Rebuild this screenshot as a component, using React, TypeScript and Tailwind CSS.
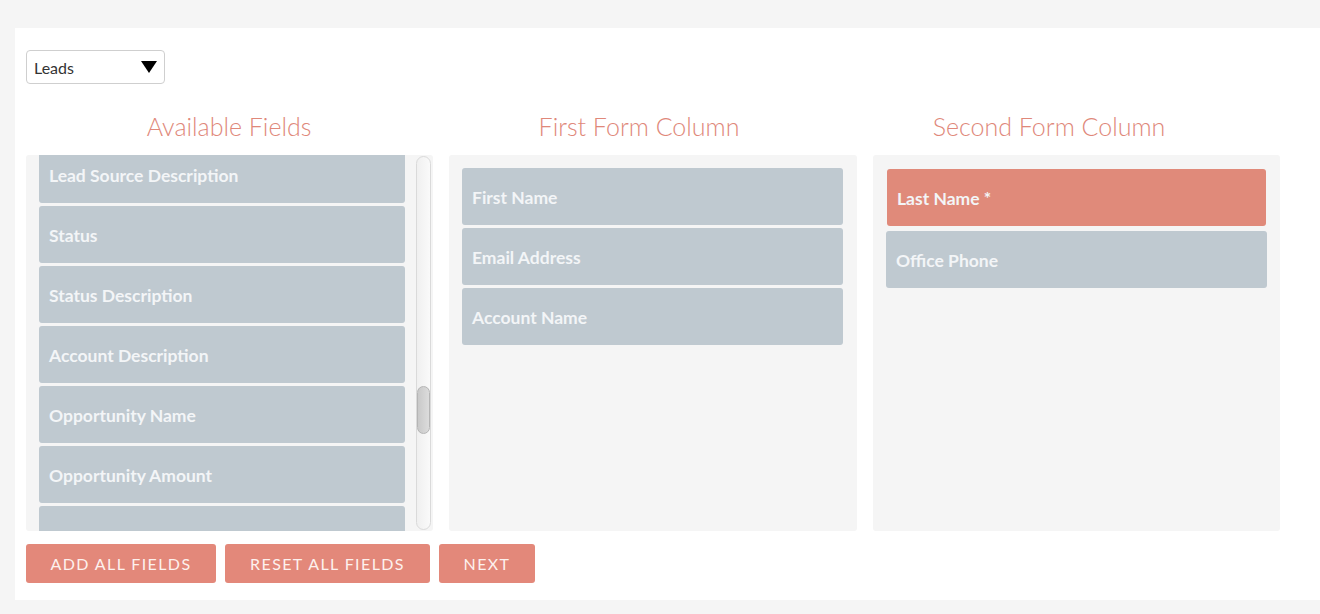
import React from "react";

const available = [
  "Lead Source Description",
  "Status",
  "Status Description",
  "Account Description",
  "Opportunity Name",
  "Opportunity Amount",
  "",
];

function Item({ label, salmon = false, extra = "" }: { label: string; salmon?: boolean; extra?: string }) {
  return (
    <div
      className={`h-[57px] shrink-0 rounded-[3px] flex items-center px-[10px] pt-[4px] text-[17.5px] font-bold text-[#f3f5f7] ${
        salmon ? "bg-[#e08a7a]" : "bg-[#bfc9d0]"
      } ${extra}`}
    >
      {label}
    </div>
  );
}

const headingCls = "w-[410px] h-[32px] leading-[32px] text-center text-[25px] font-light text-[#e0887a]";

export default function App() {
  return (
    <div
      className="w-[1320px] h-[614px] bg-[#f5f5f5] pt-[28px] pl-[15px] overflow-hidden"
      style={{ fontFamily: "Lato, 'Open Sans', sans-serif" }}
    >
      <div className="bg-white h-[572px] pl-[11px] pt-[22px] pb-[17px] flex flex-col">
        {/* select */}
        <div className="w-[139px] h-[34px] border border-[#cfcfcf] rounded-[4px] flex items-center justify-between pl-[7px] pr-[6px]">
          <span className="text-[16px] text-[#333] pt-[2px]">Leads</span>
          <svg width="18" height="14" viewBox="0 0 18 14">
            <polygon points="1,1 17,1 9,13" fill="#000" />
          </svg>
        </div>

        {/* headings */}
        <div className="flex mt-[26px] ml-[-2px]">
          <h2 className={headingCls}>Available Fields</h2>
          <h2 className={headingCls}>First Form Column</h2>
          <h2 className={headingCls}>Second Form Column</h2>
        </div>

        {/* columns */}
        <div className="flex gap-[16px] mt-[13px]">
          {/* Available */}
          <div className="w-[407px] h-[376px] bg-[#f5f5f5] rounded-[3px] flex pl-[13px] pr-[2px]">
            <div className="w-[366px] overflow-hidden">
              <div className="flex flex-col gap-[3px] mt-[-9px]">
                {available.map((a, i) => (
                  <Item key={i} label={a} />
                ))}
              </div>
            </div>
            <div className="ml-[11px] w-[15px] mt-[1px] mb-[1px] rounded-full border border-[#dadada] bg-gradient-to-r from-[#f0f0f0] to-[#fafafa] flex flex-col">
              <div className="mt-[229px] h-[48px] w-full rounded-full border border-[#b5b5b5] bg-gradient-to-r from-[#c9c9c9] to-[#dcdcdc]" />
            </div>
          </div>

          {/* First */}
          <div className="w-[408px] h-[376px] bg-[#f5f5f5] rounded-[3px] pt-[13px] pl-[13px] pr-[14px] flex flex-col gap-[3px]">
            <Item label="First Name" />
            <Item label="Email Address" />
            <Item label="Account Name" />
          </div>

          {/* Second */}
          <div className="w-[407px] h-[376px] bg-[#f5f5f5] rounded-[3px] pt-[14px] pl-[13px] pr-[13px] flex flex-col gap-[5px]">
            <Item label="Last Name *" salmon extra="mx-[1px]" />
            <Item label="Office Phone" />
          </div>
        </div>

        {/* buttons */}
        <div className="flex gap-[9px] mt-[13px]">
          <button className="h-[39px] w-[190px] rounded-[3px] bg-[#e3887a] text-[#fdf1ee] text-[16px] tracking-[1.4px]">ADD ALL FIELDS</button>
          <button className="h-[39px] w-[205px] rounded-[3px] bg-[#e3887a] text-[#fdf1ee] text-[16px] tracking-[1.4px]">RESET ALL FIELDS</button>
          <button className="h-[39px] w-[96px] rounded-[3px] bg-[#e3887a] text-[#fdf1ee] text-[16px] tracking-[1.4px]">NEXT</button>
        </div>
      </div>
    </div>
  );
}
